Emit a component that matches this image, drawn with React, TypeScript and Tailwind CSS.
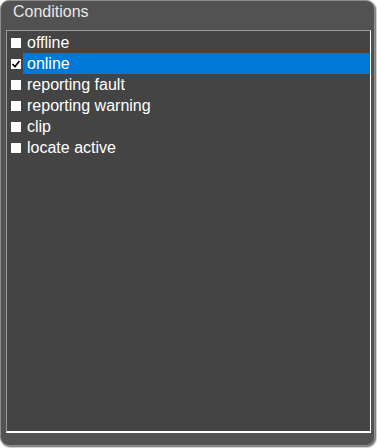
import React from 'react';

const App = () => {
  const conditions = [
    { id: 1, label: 'offline', checked: false },
    { id: 2, label: 'online', checked: true },
    { id: 3, label: 'reporting fault', checked: false },
    { id: 4, label: 'reporting warning', checked: false },
    { id: 5, label: 'clip', checked: false },
    { id: 6, label: 'locate active', checked: false },
  ];
  const selected = 2;

  return (
    <div className="w-[377px] h-[448px] bg-white" style={{ fontFamily: '"Liberation Sans", Arial, sans-serif' }}>
      <div className="w-[375px] h-[446px] rounded-[9px] border border-[#8e8e8e] bg-[#525252] shadow-[1px_1px_2px_#555] flex flex-col">
        <div className="h-[29px] pl-[12px] pt-[2px] text-[16px] leading-[18px] text-[#e8e8e8]">
          Conditions
        </div>
        <div className="flex-1 ml-[5px] mr-[3px] mb-[12px] border border-t-[#9a9a9a] border-l-[#9a9a9a] border-r-white border-b-[2px] border-b-white bg-[#444444] pt-[1px]">
          {conditions.map(c => (
            <div key={c.id} className="flex items-center h-[21px]">
              <div className="w-[10px] h-[10px] ml-[4px] mr-[2px] bg-white flex items-center justify-center shrink-0">
                {c.checked && (
                  <svg width="8" height="8" viewBox="0 0 8 8">
                    <path d="M0.5 4 L3 6.5 L7.5 1" stroke="black" strokeWidth="1.6" fill="none" />
                  </svg>
                )}
              </div>
              <div
                className={
                  c.id === selected
                    ? 'flex-1 h-full bg-[#0078d7] text-white text-[16px] leading-[21px] pl-[4px]'
                    : 'flex-1 h-full text-white text-[16px] leading-[21px] pl-[4px]'
                }
              >
                {c.label}
              </div>
            </div>
          ))}
        </div>
      </div>
    </div>
  );
};

export default App;
